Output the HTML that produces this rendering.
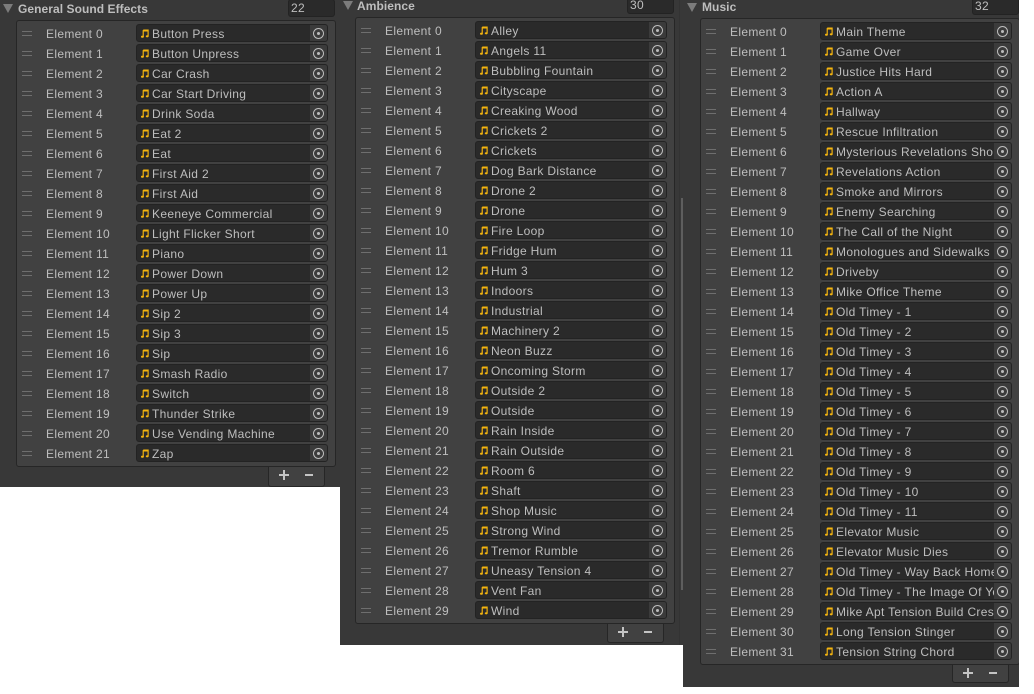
<!DOCTYPE html>
<html><head><meta charset="utf-8"><style>
html,body{margin:0;padding:0;background:#fff}
body{width:1034px;height:694px;overflow:hidden;position:relative;font:12px "Liberation Sans",sans-serif;color:#bebebe;letter-spacing:.33px}
.p{position:absolute;top:0;background:#383838;overflow:hidden}
.a{position:absolute;left:0;width:0;height:0;border-left:5px solid transparent;border-right:5px solid transparent;border-top:9px solid #7c7c7c}
.t{position:absolute;font-weight:bold;line-height:14px;white-space:nowrap;color:#bebebe;letter-spacing:.06px}
.c{position:absolute;width:47px;height:18px;box-sizing:border-box;background:#2a2a2a;border:1px solid #232323;border-radius:3px;line-height:16px;padding-left:2px;font-size:12px}
.b{position:absolute;box-sizing:border-box;background:#414141;border:1px solid #262626;border-radius:3px}
.ft{position:absolute;width:57px;height:21px;box-sizing:border-box;background:#414141;border:1px solid #262626;border-top:0;border-radius:0 0 3px 3px}
.ft i{position:absolute;background:#c4c4c4}
.r{position:absolute;left:0;height:20px;width:320px}
.h{position:absolute;left:5px;top:7px;width:10px;height:3px;border-top:1px solid #6e6e6e;border-bottom:1px solid #6e6e6e}
.l{position:absolute;left:29px;top:3px;line-height:14px;white-space:nowrap}
.f{position:absolute;left:119px;top:0;width:192px;height:18px;box-sizing:border-box;background:#2a2a2a;border:1px solid #232323;border-radius:3px;overflow:hidden}
.f svg{position:absolute;left:4px;top:4px;width:8px;height:9px}
.f b{position:absolute;left:15px;top:2px;width:158px;overflow:hidden;font-weight:normal;line-height:14px;white-space:nowrap}
.f em{position:absolute;right:0;top:0;width:17px;height:16px;background:#3b3b3b}
.f em:before{content:"";position:absolute;left:3px;top:3px;width:9px;height:9px;border:1px solid #bdbdbd;border-radius:50%}
.f em:after{content:"";position:absolute;left:7px;top:7px;width:3px;height:3px;background:#bdbdbd;border-radius:50%}
</style></head><body>
<svg width="0" height="0" style="position:absolute"><defs><symbol id="n" viewBox="0 0 9 10"><path d="M2.5 1.2H8V8M2.5 1.2V8.5" fill="none" stroke="#f5b50f" stroke-width="1.3"/><path d="M2.5 1.2H8V2.7H2.5Z" fill="#f5b50f"/><ellipse cx="1.6" cy="8.6" rx="1.6" ry="1.2" fill="#f5b50f"/><ellipse cx="7" cy="8.1" rx="1.6" ry="1.2" fill="#f5b50f"/></symbol></defs></svg>

<div class="p" style="left:0;width:340px;height:487px">
<div class="a" style="left:3px;top:4px"></div><div class="t" style="left:18px;top:2px">General Sound Effects</div><div class="c" style="left:288px;top:-1px">22</div>
<div class="ft" style="left:268px;top:466px"><i style="left:10px;top:8px;width:10px;height:2px"></i><i style="left:14px;top:4px;width:2px;height:10px"></i><i style="left:36px;top:8px;width:8px;height:2px"></i></div>
<div class="b" style="left:16px;top:20px;width:320px;height:447px"></div>
<div style="position:absolute;left:17px;top:24px">
<div class="r" style="top:0"><i class="h"></i><span class="l">Element 0</span><span class="f"><svg width="9" height="10"><use href="#n"/></svg><b>Button Press</b><em></em></span></div>
<div class="r" style="top:20px"><i class="h"></i><span class="l">Element 1</span><span class="f"><svg width="9" height="10"><use href="#n"/></svg><b>Button Unpress</b><em></em></span></div>
<div class="r" style="top:40px"><i class="h"></i><span class="l">Element 2</span><span class="f"><svg width="9" height="10"><use href="#n"/></svg><b>Car Crash</b><em></em></span></div>
<div class="r" style="top:60px"><i class="h"></i><span class="l">Element 3</span><span class="f"><svg width="9" height="10"><use href="#n"/></svg><b>Car Start Driving</b><em></em></span></div>
<div class="r" style="top:80px"><i class="h"></i><span class="l">Element 4</span><span class="f"><svg width="9" height="10"><use href="#n"/></svg><b>Drink Soda</b><em></em></span></div>
<div class="r" style="top:100px"><i class="h"></i><span class="l">Element 5</span><span class="f"><svg width="9" height="10"><use href="#n"/></svg><b>Eat 2</b><em></em></span></div>
<div class="r" style="top:120px"><i class="h"></i><span class="l">Element 6</span><span class="f"><svg width="9" height="10"><use href="#n"/></svg><b>Eat</b><em></em></span></div>
<div class="r" style="top:140px"><i class="h"></i><span class="l">Element 7</span><span class="f"><svg width="9" height="10"><use href="#n"/></svg><b>First Aid 2</b><em></em></span></div>
<div class="r" style="top:160px"><i class="h"></i><span class="l">Element 8</span><span class="f"><svg width="9" height="10"><use href="#n"/></svg><b>First Aid</b><em></em></span></div>
<div class="r" style="top:180px"><i class="h"></i><span class="l">Element 9</span><span class="f"><svg width="9" height="10"><use href="#n"/></svg><b>Keeneye Commercial</b><em></em></span></div>
<div class="r" style="top:200px"><i class="h"></i><span class="l">Element 10</span><span class="f"><svg width="9" height="10"><use href="#n"/></svg><b>Light Flicker Short</b><em></em></span></div>
<div class="r" style="top:220px"><i class="h"></i><span class="l">Element 11</span><span class="f"><svg width="9" height="10"><use href="#n"/></svg><b>Piano</b><em></em></span></div>
<div class="r" style="top:240px"><i class="h"></i><span class="l">Element 12</span><span class="f"><svg width="9" height="10"><use href="#n"/></svg><b>Power Down</b><em></em></span></div>
<div class="r" style="top:260px"><i class="h"></i><span class="l">Element 13</span><span class="f"><svg width="9" height="10"><use href="#n"/></svg><b>Power Up</b><em></em></span></div>
<div class="r" style="top:280px"><i class="h"></i><span class="l">Element 14</span><span class="f"><svg width="9" height="10"><use href="#n"/></svg><b>Sip 2</b><em></em></span></div>
<div class="r" style="top:300px"><i class="h"></i><span class="l">Element 15</span><span class="f"><svg width="9" height="10"><use href="#n"/></svg><b>Sip 3</b><em></em></span></div>
<div class="r" style="top:320px"><i class="h"></i><span class="l">Element 16</span><span class="f"><svg width="9" height="10"><use href="#n"/></svg><b>Sip</b><em></em></span></div>
<div class="r" style="top:340px"><i class="h"></i><span class="l">Element 17</span><span class="f"><svg width="9" height="10"><use href="#n"/></svg><b>Smash Radio</b><em></em></span></div>
<div class="r" style="top:360px"><i class="h"></i><span class="l">Element 18</span><span class="f"><svg width="9" height="10"><use href="#n"/></svg><b>Switch</b><em></em></span></div>
<div class="r" style="top:380px"><i class="h"></i><span class="l">Element 19</span><span class="f"><svg width="9" height="10"><use href="#n"/></svg><b>Thunder Strike</b><em></em></span></div>
<div class="r" style="top:400px"><i class="h"></i><span class="l">Element 20</span><span class="f"><svg width="9" height="10"><use href="#n"/></svg><b>Use Vending Machine</b><em></em></span></div>
<div class="r" style="top:420px"><i class="h"></i><span class="l">Element 21</span><span class="f"><svg width="9" height="10"><use href="#n"/></svg><b>Zap</b><em></em></span></div>
</div></div>

<div class="p" style="left:340px;width:343px;height:645px">
<div class="a" style="left:3px;top:1px"></div><div class="t" style="left:17px;top:-1px">Ambience</div><div class="c" style="left:287px;top:-4px">30</div>
<div class="ft" style="left:267px;top:623px;width:57px;height:20px"><i style="left:10px;top:8px;width:10px;height:2px"></i><i style="left:14px;top:4px;width:2px;height:10px"></i><i style="left:36px;top:8px;width:8px;height:2px"></i></div>
<div class="b" style="left:15px;top:17px;width:320px;height:607px"></div>
<div style="position:absolute;left:339px;top:0;width:1px;height:645px;background:#333"></div>
<div style="position:absolute;left:341px;top:198px;width:2px;height:392px;background:#5e5e5e"></div>
<div style="position:absolute;left:16px;top:21px">
<div class="r" style="top:0"><i class="h"></i><span class="l">Element 0</span><span class="f"><svg width="9" height="10"><use href="#n"/></svg><b>Alley</b><em></em></span></div>
<div class="r" style="top:20px"><i class="h"></i><span class="l">Element 1</span><span class="f"><svg width="9" height="10"><use href="#n"/></svg><b>Angels 11</b><em></em></span></div>
<div class="r" style="top:40px"><i class="h"></i><span class="l">Element 2</span><span class="f"><svg width="9" height="10"><use href="#n"/></svg><b>Bubbling Fountain</b><em></em></span></div>
<div class="r" style="top:60px"><i class="h"></i><span class="l">Element 3</span><span class="f"><svg width="9" height="10"><use href="#n"/></svg><b>Cityscape</b><em></em></span></div>
<div class="r" style="top:80px"><i class="h"></i><span class="l">Element 4</span><span class="f"><svg width="9" height="10"><use href="#n"/></svg><b>Creaking Wood</b><em></em></span></div>
<div class="r" style="top:100px"><i class="h"></i><span class="l">Element 5</span><span class="f"><svg width="9" height="10"><use href="#n"/></svg><b>Crickets 2</b><em></em></span></div>
<div class="r" style="top:120px"><i class="h"></i><span class="l">Element 6</span><span class="f"><svg width="9" height="10"><use href="#n"/></svg><b>Crickets</b><em></em></span></div>
<div class="r" style="top:140px"><i class="h"></i><span class="l">Element 7</span><span class="f"><svg width="9" height="10"><use href="#n"/></svg><b>Dog Bark Distance</b><em></em></span></div>
<div class="r" style="top:160px"><i class="h"></i><span class="l">Element 8</span><span class="f"><svg width="9" height="10"><use href="#n"/></svg><b>Drone 2</b><em></em></span></div>
<div class="r" style="top:180px"><i class="h"></i><span class="l">Element 9</span><span class="f"><svg width="9" height="10"><use href="#n"/></svg><b>Drone</b><em></em></span></div>
<div class="r" style="top:200px"><i class="h"></i><span class="l">Element 10</span><span class="f"><svg width="9" height="10"><use href="#n"/></svg><b>Fire Loop</b><em></em></span></div>
<div class="r" style="top:220px"><i class="h"></i><span class="l">Element 11</span><span class="f"><svg width="9" height="10"><use href="#n"/></svg><b>Fridge Hum</b><em></em></span></div>
<div class="r" style="top:240px"><i class="h"></i><span class="l">Element 12</span><span class="f"><svg width="9" height="10"><use href="#n"/></svg><b>Hum 3</b><em></em></span></div>
<div class="r" style="top:260px"><i class="h"></i><span class="l">Element 13</span><span class="f"><svg width="9" height="10"><use href="#n"/></svg><b>Indoors</b><em></em></span></div>
<div class="r" style="top:280px"><i class="h"></i><span class="l">Element 14</span><span class="f"><svg width="9" height="10"><use href="#n"/></svg><b>Industrial</b><em></em></span></div>
<div class="r" style="top:300px"><i class="h"></i><span class="l">Element 15</span><span class="f"><svg width="9" height="10"><use href="#n"/></svg><b>Machinery 2</b><em></em></span></div>
<div class="r" style="top:320px"><i class="h"></i><span class="l">Element 16</span><span class="f"><svg width="9" height="10"><use href="#n"/></svg><b>Neon Buzz</b><em></em></span></div>
<div class="r" style="top:340px"><i class="h"></i><span class="l">Element 17</span><span class="f"><svg width="9" height="10"><use href="#n"/></svg><b>Oncoming Storm</b><em></em></span></div>
<div class="r" style="top:360px"><i class="h"></i><span class="l">Element 18</span><span class="f"><svg width="9" height="10"><use href="#n"/></svg><b>Outside 2</b><em></em></span></div>
<div class="r" style="top:380px"><i class="h"></i><span class="l">Element 19</span><span class="f"><svg width="9" height="10"><use href="#n"/></svg><b>Outside</b><em></em></span></div>
<div class="r" style="top:400px"><i class="h"></i><span class="l">Element 20</span><span class="f"><svg width="9" height="10"><use href="#n"/></svg><b>Rain Inside</b><em></em></span></div>
<div class="r" style="top:420px"><i class="h"></i><span class="l">Element 21</span><span class="f"><svg width="9" height="10"><use href="#n"/></svg><b>Rain Outside</b><em></em></span></div>
<div class="r" style="top:440px"><i class="h"></i><span class="l">Element 22</span><span class="f"><svg width="9" height="10"><use href="#n"/></svg><b>Room 6</b><em></em></span></div>
<div class="r" style="top:460px"><i class="h"></i><span class="l">Element 23</span><span class="f"><svg width="9" height="10"><use href="#n"/></svg><b>Shaft</b><em></em></span></div>
<div class="r" style="top:480px"><i class="h"></i><span class="l">Element 24</span><span class="f"><svg width="9" height="10"><use href="#n"/></svg><b>Shop Music</b><em></em></span></div>
<div class="r" style="top:500px"><i class="h"></i><span class="l">Element 25</span><span class="f"><svg width="9" height="10"><use href="#n"/></svg><b>Strong Wind</b><em></em></span></div>
<div class="r" style="top:520px"><i class="h"></i><span class="l">Element 26</span><span class="f"><svg width="9" height="10"><use href="#n"/></svg><b>Tremor Rumble</b><em></em></span></div>
<div class="r" style="top:540px"><i class="h"></i><span class="l">Element 27</span><span class="f"><svg width="9" height="10"><use href="#n"/></svg><b>Uneasy Tension 4</b><em></em></span></div>
<div class="r" style="top:560px"><i class="h"></i><span class="l">Element 28</span><span class="f"><svg width="9" height="10"><use href="#n"/></svg><b>Vent Fan</b><em></em></span></div>
<div class="r" style="top:580px"><i class="h"></i><span class="l">Element 29</span><span class="f"><svg width="9" height="10"><use href="#n"/></svg><b>Wind</b><em></em></span></div>
</div></div>

<div class="p" style="left:683px;width:336px;height:687px">
<div class="a" style="left:4px;top:3px"></div><div class="t" style="left:19px;top:0">Music</div><div class="c" style="left:289px;top:-3px">32</div>
<div class="ft" style="left:269px;top:664px;height:19px"><i style="left:10px;top:8px;width:10px;height:2px"></i><i style="left:14px;top:4px;width:2px;height:10px"></i><i style="left:36px;top:8px;width:8px;height:2px"></i></div>
<div class="b" style="left:17px;top:18px;width:320px;height:647px"></div>
<div style="position:absolute;left:18px;top:22px">
<div class="r" style="top:0"><i class="h"></i><span class="l">Element 0</span><span class="f"><svg width="9" height="10"><use href="#n"/></svg><b>Main Theme</b><em></em></span></div>
<div class="r" style="top:20px"><i class="h"></i><span class="l">Element 1</span><span class="f"><svg width="9" height="10"><use href="#n"/></svg><b>Game Over</b><em></em></span></div>
<div class="r" style="top:40px"><i class="h"></i><span class="l">Element 2</span><span class="f"><svg width="9" height="10"><use href="#n"/></svg><b>Justice Hits Hard</b><em></em></span></div>
<div class="r" style="top:60px"><i class="h"></i><span class="l">Element 3</span><span class="f"><svg width="9" height="10"><use href="#n"/></svg><b>Action A</b><em></em></span></div>
<div class="r" style="top:80px"><i class="h"></i><span class="l">Element 4</span><span class="f"><svg width="9" height="10"><use href="#n"/></svg><b>Hallway</b><em></em></span></div>
<div class="r" style="top:100px"><i class="h"></i><span class="l">Element 5</span><span class="f"><svg width="9" height="10"><use href="#n"/></svg><b>Rescue Infiltration</b><em></em></span></div>
<div class="r" style="top:120px"><i class="h"></i><span class="l">Element 6</span><span class="f"><svg width="9" height="10"><use href="#n"/></svg><b>Mysterious Revelations Short</b><em></em></span></div>
<div class="r" style="top:140px"><i class="h"></i><span class="l">Element 7</span><span class="f"><svg width="9" height="10"><use href="#n"/></svg><b>Revelations Action</b><em></em></span></div>
<div class="r" style="top:160px"><i class="h"></i><span class="l">Element 8</span><span class="f"><svg width="9" height="10"><use href="#n"/></svg><b>Smoke and Mirrors</b><em></em></span></div>
<div class="r" style="top:180px"><i class="h"></i><span class="l">Element 9</span><span class="f"><svg width="9" height="10"><use href="#n"/></svg><b>Enemy Searching</b><em></em></span></div>
<div class="r" style="top:200px"><i class="h"></i><span class="l">Element 10</span><span class="f"><svg width="9" height="10"><use href="#n"/></svg><b>The Call of the Night</b><em></em></span></div>
<div class="r" style="top:220px"><i class="h"></i><span class="l">Element 11</span><span class="f"><svg width="9" height="10"><use href="#n"/></svg><b>Monologues and Sidewalks</b><em></em></span></div>
<div class="r" style="top:240px"><i class="h"></i><span class="l">Element 12</span><span class="f"><svg width="9" height="10"><use href="#n"/></svg><b>Driveby</b><em></em></span></div>
<div class="r" style="top:260px"><i class="h"></i><span class="l">Element 13</span><span class="f"><svg width="9" height="10"><use href="#n"/></svg><b>Mike Office Theme</b><em></em></span></div>
<div class="r" style="top:280px"><i class="h"></i><span class="l">Element 14</span><span class="f"><svg width="9" height="10"><use href="#n"/></svg><b>Old Timey - 1</b><em></em></span></div>
<div class="r" style="top:300px"><i class="h"></i><span class="l">Element 15</span><span class="f"><svg width="9" height="10"><use href="#n"/></svg><b>Old Timey - 2</b><em></em></span></div>
<div class="r" style="top:320px"><i class="h"></i><span class="l">Element 16</span><span class="f"><svg width="9" height="10"><use href="#n"/></svg><b>Old Timey - 3</b><em></em></span></div>
<div class="r" style="top:340px"><i class="h"></i><span class="l">Element 17</span><span class="f"><svg width="9" height="10"><use href="#n"/></svg><b>Old Timey - 4</b><em></em></span></div>
<div class="r" style="top:360px"><i class="h"></i><span class="l">Element 18</span><span class="f"><svg width="9" height="10"><use href="#n"/></svg><b>Old Timey - 5</b><em></em></span></div>
<div class="r" style="top:380px"><i class="h"></i><span class="l">Element 19</span><span class="f"><svg width="9" height="10"><use href="#n"/></svg><b>Old Timey - 6</b><em></em></span></div>
<div class="r" style="top:400px"><i class="h"></i><span class="l">Element 20</span><span class="f"><svg width="9" height="10"><use href="#n"/></svg><b>Old Timey - 7</b><em></em></span></div>
<div class="r" style="top:420px"><i class="h"></i><span class="l">Element 21</span><span class="f"><svg width="9" height="10"><use href="#n"/></svg><b>Old Timey - 8</b><em></em></span></div>
<div class="r" style="top:440px"><i class="h"></i><span class="l">Element 22</span><span class="f"><svg width="9" height="10"><use href="#n"/></svg><b>Old Timey - 9</b><em></em></span></div>
<div class="r" style="top:460px"><i class="h"></i><span class="l">Element 23</span><span class="f"><svg width="9" height="10"><use href="#n"/></svg><b>Old Timey - 10</b><em></em></span></div>
<div class="r" style="top:480px"><i class="h"></i><span class="l">Element 24</span><span class="f"><svg width="9" height="10"><use href="#n"/></svg><b>Old Timey - 11</b><em></em></span></div>
<div class="r" style="top:500px"><i class="h"></i><span class="l">Element 25</span><span class="f"><svg width="9" height="10"><use href="#n"/></svg><b>Elevator Music</b><em></em></span></div>
<div class="r" style="top:520px"><i class="h"></i><span class="l">Element 26</span><span class="f"><svg width="9" height="10"><use href="#n"/></svg><b>Elevator Music Dies</b><em></em></span></div>
<div class="r" style="top:540px"><i class="h"></i><span class="l">Element 27</span><span class="f"><svg width="9" height="10"><use href="#n"/></svg><b>Old Timey - Way Back Home</b><em></em></span></div>
<div class="r" style="top:560px"><i class="h"></i><span class="l">Element 28</span><span class="f"><svg width="9" height="10"><use href="#n"/></svg><b>Old Timey - The Image Of You</b><em></em></span></div>
<div class="r" style="top:580px"><i class="h"></i><span class="l">Element 29</span><span class="f"><svg width="9" height="10"><use href="#n"/></svg><b>Mike Apt Tension Build Crescendo</b><em></em></span></div>
<div class="r" style="top:600px"><i class="h"></i><span class="l">Element 30</span><span class="f"><svg width="9" height="10"><use href="#n"/></svg><b>Long Tension Stinger</b><em></em></span></div>
<div class="r" style="top:620px"><i class="h"></i><span class="l">Element 31</span><span class="f"><svg width="9" height="10"><use href="#n"/></svg><b>Tension String Chord</b><em></em></span></div>
</div></div>
</body></html>
